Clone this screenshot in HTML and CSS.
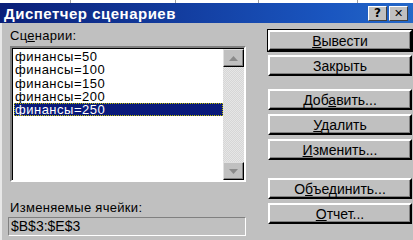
FILE: index.html
```html
<!DOCTYPE html>
<html lang="ru">
<head>
  <meta charset="UTF-8">
  <title>Диспетчер сценариев</title>
  <link rel="stylesheet" href="styles.css">
</head>
<body>
  <div class="sheet">
    <span class="col w70"></span><span class="col w105"></span><span class="col w83"></span><span class="col w99"></span><span class="col"></span>
  </div>

  <div class="dialog">
    <div class="titlebar">
      <span class="title">Диспетчер сценариев</span>
      <div class="caption-btns">
        <button class="cap">?</button>
        <button class="cap close">✕</button>
      </div>
    </div>

    <div class="content">
      <div class="left">
        <div class="label">Сц<u>е</u>нарии:</div>
        <div class="listbox">
          <ul class="items">
            <li>финансы=50</li>
            <li>финансы=100</li>
            <li>финансы=150</li>
            <li>финансы=200</li>
            <li class="selected">финансы=250</li>
          </ul>
          <div class="scrollbar">
            <div class="arrow">
              <svg width="9" height="5" viewBox="0 0 9 5"><path d="M4.5 0 L9 5 L0 5 Z" fill="#8a8a8a"/></svg>
            </div>
            <div class="track"></div>
            <div class="arrow">
              <svg width="9" height="5" viewBox="0 0 9 5"><path d="M0 0 L9 0 L4.5 5 Z" fill="#8a8a8a"/></svg>
            </div>
          </div>
        </div>
        <div class="label cells">Изменяемые ячейки:</div>
        <div class="field">$B$3:$E$3</div>
      </div>

      <div class="right">
        <button class="btn default"><u>В</u>ывести</button>
        <button class="btn">Закрыть</button>
        <button class="btn group">Доб<u>а</u>вить...</button>
        <button class="btn"><u>У</u>далить</button>
        <button class="btn"><u>И</u>зменить...</button>
        <button class="btn group">О<u>б</u>ъединить...</button>
        <button class="btn"><u>О</u>тчет...</button>
      </div>
    </div>
  </div>
</body>
</html>
```

FILE: styles.css
```css
body {
  margin: 0;
  width: 413px;
  height: 240px;
  overflow: hidden;
  background: #c0c0c0;
  font-family: 'Liberation Sans', Arial, sans-serif;
  font-size: 13px;
  color: #000;
}
.sheet {
  display: flex;
  height: 3px;
  background: #fff;
}
.sheet .col {
  border-right: 1px solid #a0a0a0;
}
.sheet .col:last-child {
  border-right: none;
  flex: 1;
}
.w70 { width: 70px; }
.w105 { width: 104px; }
.w83 { width: 82px; }
.w99 { width: 98px; }

.dialog {
  height: 237px;
  border-left: 2px solid #e8e8e8;
  box-sizing: border-box;
}
.titlebar {
  display: flex;
  align-items: center;
  justify-content: space-between;
  height: 20px;
  margin-left: -2px;
  padding: 0 4px 0 4px;
  background: linear-gradient(to right, #0a1f78, #1a56c0 80%, #2468c8);
}
.title {
  color: #fff;
  font-weight: bold;
  font-size: 15px;
  letter-spacing: 0.5px;
}
.caption-btns {
  display: flex;
  gap: 2px;
  margin-right: 1px;
}
.cap {
  width: 19px;
  height: 15px;
  padding: 0;
  background: #c0c0c0;
  border: 1px solid;
  border-color: #fff #404040 #404040 #fff;
  font-family: 'DejaVu Sans', sans-serif;
  font-weight: bold;
  font-size: 12px;
  line-height: 13px;
  color: #000;
}
.cap.close {
  font-size: 11px;
}

.content {
  display: flex;
  padding: 5px 0 0 6px;
}
.left {
  width: 238px;
}
.label {
  height: 14px;
  line-height: 14px;
  padding-left: 2px;
  margin-top: 1px;
  letter-spacing: 0.3px;
}
.listbox {
  display: flex;
  height: 136px;
  margin-top: 3px;
  margin-left: 2px;
  background: #fff;
  border: 2px solid;
  border-color: #808080 #fff #fff #808080;
  box-shadow: inset 1px 1px 0 #000;
  box-sizing: border-box;
}
.items {
  flex: 1;
  list-style: none;
  margin: 0;
  padding: 2px 0 0 2px;
}
.items li {
  height: 13.3px;
  line-height: 13.3px;
  padding-left: 1px;
  font-size: 13px;
  letter-spacing: 0.5px;
}
.items li.selected {
  background: #0a1a7a;
  color: #fff;
  outline: 1px dotted #c0c000;
  outline-offset: -1px;
}
.scrollbar {
  display: flex;
  flex-direction: column;
  width: 21px;
  margin: 1px 0 0 0;
}
.arrow {
  display: flex;
  align-items: center;
  justify-content: center;
  height: 18px;
  background: #c0c0c0;
  border: 1px solid;
  border-color: #e0e0e0 #000 #000 #e0e0e0;
  box-shadow: inset -1px -1px 0 #808080;
  box-sizing: border-box;
}
.track {
  flex: 1;
  background-color: #e0e0e0;
  background-image: repeating-conic-gradient(#d6d6d6 0 25%, #e6e6e6 0 50%);
  background-size: 2px 2px;
}
.label.cells {
  margin-top: 19px;
}
.field {
  height: 19px;
  line-height: 17px;
  margin-top: 2px;
  padding-left: 2px;
  font-size: 14px;
  border: 1px solid;
  border-color: #808080 #fff #fff #808080;
  box-sizing: border-box;
}

.right {
  display: flex;
  flex-direction: column;
  gap: 4px;
  margin-left: 22px;
  padding-top: 2px;
}
.btn {
  width: 144px;
  height: 21px;
  padding: 0;
  background: #c0c0c0;
  border: 2px solid;
  border-color: #fff #000 #000 #fff;
  box-shadow: inset -1px -1px 0 #808080;
  font-family: 'Liberation Sans', Arial, sans-serif;
  font-size: 14px;
  color: #000;
}
.btn.default {
  outline: 1px solid #000;
}
.btn.group {
  margin-top: 9px;
}
.right .btn.group:nth-child(6) {
  margin-top: 14px;
}
```
